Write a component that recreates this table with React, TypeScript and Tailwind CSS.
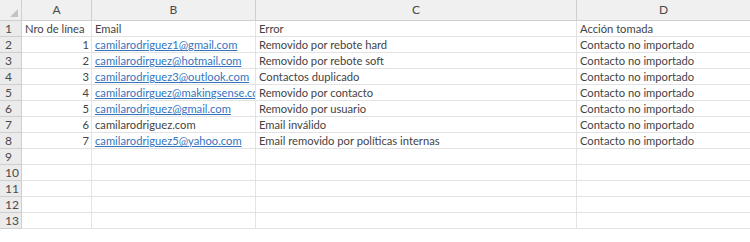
import React from "react";

type Row = {
  n: string;
  email: string;
  link: boolean;
  error: string;
  action: string;
};

const rows: Row[] = [
  { n: "Nro de línea", email: "Email", link: false, error: "Error", action: "Acción tomada" },
  { n: "1", email: "camilarodriguez1@gmail.com", link: true, error: "Removido por rebote hard", action: "Contacto no importado" },
  { n: "2", email: "camilarodirguez@hotmail.com", link: true, error: "Removido por rebote soft", action: "Contacto no importado" },
  { n: "3", email: "camilarodriguez3@outlook.com", link: true, error: "Contactos duplicado", action: "Contacto no importado" },
  { n: "4", email: "camilarodirguez@makingsense.com", link: true, error: "Removido por contacto", action: "Contacto no importado" },
  { n: "5", email: "camilarodriguez@gmail.com", link: true, error: "Removido por usuario", action: "Contacto no importado" },
  { n: "6", email: "camilarodriguez.com", link: false, error: "Email inválido", action: "Contacto no importado" },
  { n: "7", email: "camilarodriguez5@yahoo.com", link: true, error: "Email removido por políticas internas", action: "Contacto no importado" },
];

const TOTAL_ROWS = 13;

const cell = "h-[16px] border-b border-r border-[#e3e3e3] overflow-hidden whitespace-nowrap leading-[15px] px-[3px]";
const colHead = "h-[21px] border-b border-r border-[#cfcfcf] bg-[#f0f0f0] text-[#4a4a4a] text-[12px] text-center leading-[20px]";
const rowHead = "h-[16px] border-b border-r border-[#cfcfcf] bg-[#ebebeb] text-[#4a4a4a] text-[12px] leading-[15px] pl-[5px]";

export default function App() {
  const body = Array.from({ length: TOTAL_ROWS }, (_, i) => rows[i] ?? null);
  return (
    <div
      className="w-[750px] h-[242px] bg-white overflow-hidden text-[11.2px] text-[#444444]"
      style={{ fontFamily: "Lato, 'Open Sans', sans-serif" }}
    >
      <div className="grid grid-cols-[22px_70px_164px_321px_1fr]">
        {/* corner with select-all triangle */}
        <div className="h-[21px] border-b border-r border-[#cfcfcf] bg-[#f0f0f0] flex items-end justify-end pr-[3px] pb-[3px]">
          <svg width="8" height="8" viewBox="0 0 8 8">
            <polygon points="8,0 8,8 0,8" fill="#c4c4c4" />
          </svg>
        </div>
        <div className={colHead}>A</div>
        <div className={colHead}>B</div>
        <div className={colHead}>C</div>
        <div className={`${colHead} border-r-0`}>D</div>

        {body.map((r, i) => (
          <React.Fragment key={i}>
            <div className={rowHead}>{i + 1}</div>
            <div className={`${cell} ${i === 0 ? "text-left" : "text-right"} pr-[2px]`}>{r?.n ?? ""}</div>
            <div className={cell}>
              {r ? (
                r.link ? (
                  <span className="text-[#3574bf] underline decoration-[#3574bf] underline-offset-[1px]">{r.email}</span>
                ) : (
                  r.email
                )
              ) : (
                ""
              )}
            </div>
            <div className={cell}>{r?.error ?? ""}</div>
            <div className={`${cell} border-r-0`}>{r?.action ?? ""}</div>
          </React.Fragment>
        ))}
      </div>
    </div>
  );
}
